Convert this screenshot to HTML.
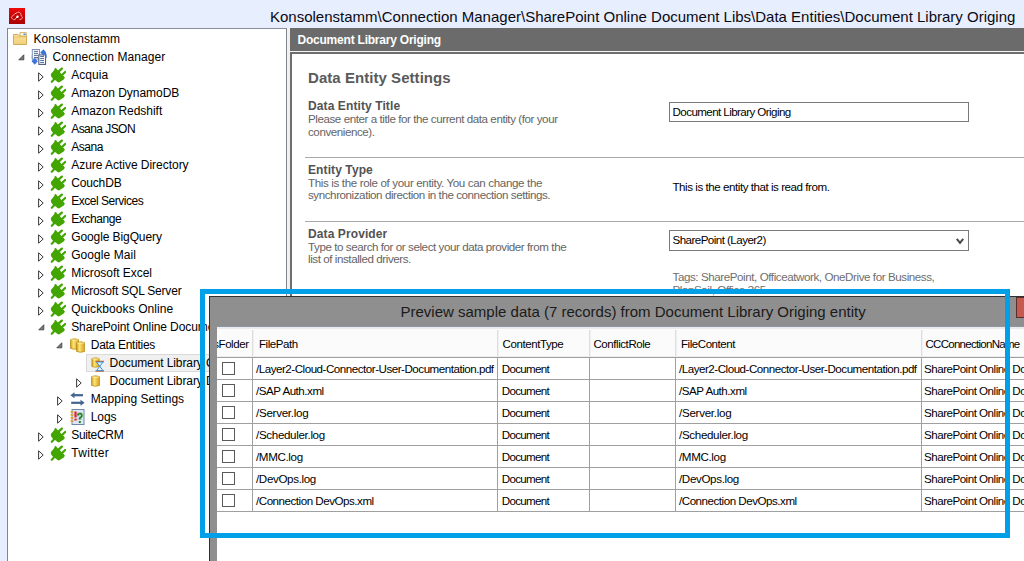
<!DOCTYPE html>
<html><head><meta charset="utf-8"><style>
html,body{margin:0;padding:0;width:1024px;height:561px;overflow:hidden;background:#e7eefd;}
body{position:relative;font-family:"Liberation Sans", sans-serif;}
.t{position:absolute;white-space:nowrap;font-family:"Liberation Sans", sans-serif;}
.r{position:absolute;}
</style></head><body>
<div class="r" style="left:0px;top:0px;width:1024px;height:561px;background:#e7eefd;"></div>
<svg class="r" style="left:9px;top:8px" width="16" height="16" viewBox="0 0 16 16">
<defs><linearGradient id="rg" x1="0" y1="0" x2="0" y2="1"><stop offset="0" stop-color="#f00a0a"/><stop offset="1" stop-color="#a80000"/></linearGradient></defs>
<rect width="16" height="16" fill="url(#rg)"/>
<path d="M10.6 11.6 L12.2 11.2 L13.9 9.5 L12.4 8.2 L11.6 5.4 Q10.5 3.8 8.8 4.3 L7 5.2 L4.8 6.6 L2.2 9.5 L4.4 11.6 L6.6 11.6" fill="none" stroke="#fff" stroke-width="0.9" stroke-dasharray="1.1 0.5"/>
<circle cx="8.5" cy="8.8" r="1.2" fill="#fff"/>
<path d="M8.3 9 L6.4 10.6" stroke="#fff" stroke-width="1"/>
</svg>
<div class="t" style="left:270px;top:8.80px;font-size:15px;line-height:15px;color:#0a0a14;font-weight:400;letter-spacing:0px;">Konsolenstamm\Connection Manager\SharePoint Online Document Libs\Data Entities\Document Library Origing</div>
<div class="r" style="left:7px;top:28px;width:280px;height:533px;background:#fff;border-left:1px solid #80858e;border-top:1px solid #8a8e96;border-right:1px solid #80858e;box-sizing:border-box;"></div>
<div class="r" style="left:287px;top:28px;width:3px;height:533px;background:#f0f0f0;"></div>
<svg width="0" height="0" style="position:absolute">
<defs>
<linearGradient id="gold" x1="0" y1="0" x2="1" y2="0"><stop offset="0" stop-color="#c99a10"/><stop offset="0.35" stop-color="#fde37a"/><stop offset="1" stop-color="#d9a21a"/></linearGradient>
<linearGradient id="fold" x1="0" y1="0" x2="0" y2="1"><stop offset="0" stop-color="#fbe3a0"/><stop offset="1" stop-color="#f0cf78"/></linearGradient>
<symbol id="plug" viewBox="0 0 16 16">
<polygon points="0.8,7.2 2.4,5.2 4.3,2.9 4.7,1.3 5.9,0.9 7.4,2.9 9,4 10.6,6 12.1,7.9 13.7,9.1 14.9,10.7 13.7,12.6 9,15.4 7.4,15 5.9,13.4 3.5,12.6 1.2,9.5" fill="#43a500"/>
<path d="M8.8 4.4 L11.8 1.6 M12 8 L15.2 5" stroke="#43a500" stroke-width="2.3" stroke-linecap="round"/>
<path d="M4.6 11.8 L1.8 14.8" stroke="#43a500" stroke-width="2.1" stroke-linecap="round"/>
</symbol>
<symbol id="cyl" viewBox="0 0 9 12">
<path d="M0.5 1.6 Q4.5 -0.2 8.5 1.6 L8.5 10.4 Q4.5 12.2 0.5 10.4 Z" fill="url(#gold)" stroke="#b88a12" stroke-width="0.7"/>
<path d="M0.8 1.8 Q4.5 3.2 8.2 1.8" fill="none" stroke="#fff1a8" stroke-width="0.8"/>
</symbol>
</defs></svg>
<div class="r" style="left:86px;top:354px;width:200px;height:18px;background:#f0f0f0;border:1px solid #d9d9d9;box-sizing:border-box;"></div>
<svg class="r" style="left:13px;top:32px" width="14" height="13" viewBox="0 0 14 13">
<path d="M0.5 2.5 L5 2.5 L6.5 4 L13.5 4 L13.5 12.5 L0.5 12.5 Z" fill="url(#fold)" stroke="#c8a550" stroke-width="0.9"/>
<path d="M7 0.7 L13.3 0.7 L13.3 4 L7 4 Z" fill="#fff" stroke="#c8a550" stroke-width="0.9"/>
<rect x="10.5" y="1.5" width="2" height="1.5" fill="#4a90e0"/>
<path d="M0.5 5 L13.5 5" stroke="#e8c46a" stroke-width="1"/>
</svg>
<div class="t" style="left:33.5px;top:32.64px;font-size:12px;line-height:12px;color:#000;font-weight:400;letter-spacing:0.042px;white-space:nowrap;">Konsolenstamm</div>
<svg class="r" style="left:17.5px;top:54.3px" width="7" height="7" viewBox="0 0 7 7"><path d="M5.8 0.8 L5.8 5.8 L0.8 5.8 Z" fill="#7a7a7a" stroke="#454545" stroke-width="0.9"/></svg>
<svg class="r" style="left:31px;top:49px" width="17" height="17" viewBox="0 0 17 17">
<rect x="1.3" y="0.5" width="7.2" height="9.6" fill="#f3f6fb" stroke="#8393b3" stroke-width="1"/>
<path d="M3 2.4 H7 M3 4.4 H7 M3 6.4 H7 M3 8.5 H7" stroke="#5b6e99" stroke-width="1"/>
<rect x="7.8" y="5.9" width="6.8" height="9.5" fill="#f3f6fb" stroke="#42536f" stroke-width="1"/>
<path d="M9.2 7.5 H13 M9.2 9.5 H13 M9.2 11.5 H13 M9.2 13.5 H13" stroke="#5b6e99" stroke-width="1"/>
<path d="M12 2 Q15.5 3 15 9" fill="none" stroke="#3f6fd0" stroke-width="1.3"/>
<path d="M9.2 3.5 L12.5 0.2 L15.2 3.5 L12.5 6.8 Z" fill="#3c74dc"/>
<path d="M5 14 Q0.8 13 1.2 6.4" fill="none" stroke="#8aa0c8" stroke-width="1.2"/>
<path d="M0.6 12.3 L3.8 9 L6.8 12.3 L3.8 15.8 Z" fill="#3c74dc"/>
</svg>
<div class="t" style="left:52.5px;top:50.64px;font-size:12px;line-height:12px;color:#000;font-weight:400;letter-spacing:0.082px;white-space:nowrap;">Connection Manager</div>
<svg class="r" style="left:38px;top:72px" width="6" height="10" viewBox="0 0 6 10"><path d="M0.6 0.8 L5.2 5 L0.6 9.2 Z" fill="#fff" stroke="#3a3a3a" stroke-width="1"/></svg>
<svg class="r" style="left:50px;top:67px" width="16" height="16"><use href="#plug"/></svg>
<div class="t" style="left:71.2px;top:68.64px;font-size:12px;line-height:12px;color:#000;font-weight:400;letter-spacing:0.06px;white-space:nowrap;">Acquia</div>
<svg class="r" style="left:38px;top:90px" width="6" height="10" viewBox="0 0 6 10"><path d="M0.6 0.8 L5.2 5 L0.6 9.2 Z" fill="#fff" stroke="#3a3a3a" stroke-width="1"/></svg>
<svg class="r" style="left:50px;top:85px" width="16" height="16"><use href="#plug"/></svg>
<div class="t" style="left:71.2px;top:86.64px;font-size:12px;line-height:12px;color:#000;font-weight:400;letter-spacing:-0.043px;white-space:nowrap;">Amazon DynamoDB</div>
<svg class="r" style="left:38px;top:108px" width="6" height="10" viewBox="0 0 6 10"><path d="M0.6 0.8 L5.2 5 L0.6 9.2 Z" fill="#fff" stroke="#3a3a3a" stroke-width="1"/></svg>
<svg class="r" style="left:50px;top:103px" width="16" height="16"><use href="#plug"/></svg>
<div class="t" style="left:71.2px;top:104.64px;font-size:12px;line-height:12px;color:#000;font-weight:400;letter-spacing:-0.021px;white-space:nowrap;">Amazon Redshift</div>
<svg class="r" style="left:38px;top:126px" width="6" height="10" viewBox="0 0 6 10"><path d="M0.6 0.8 L5.2 5 L0.6 9.2 Z" fill="#fff" stroke="#3a3a3a" stroke-width="1"/></svg>
<svg class="r" style="left:50px;top:121px" width="16" height="16"><use href="#plug"/></svg>
<div class="t" style="left:71.2px;top:122.64px;font-size:12px;line-height:12px;color:#000;font-weight:400;letter-spacing:-0.556px;white-space:nowrap;">Asana JSON</div>
<svg class="r" style="left:38px;top:144px" width="6" height="10" viewBox="0 0 6 10"><path d="M0.6 0.8 L5.2 5 L0.6 9.2 Z" fill="#fff" stroke="#3a3a3a" stroke-width="1"/></svg>
<svg class="r" style="left:50px;top:139px" width="16" height="16"><use href="#plug"/></svg>
<div class="t" style="left:71.2px;top:140.64px;font-size:12px;line-height:12px;color:#000;font-weight:400;letter-spacing:-0.475px;white-space:nowrap;">Asana</div>
<svg class="r" style="left:38px;top:162px" width="6" height="10" viewBox="0 0 6 10"><path d="M0.6 0.8 L5.2 5 L0.6 9.2 Z" fill="#fff" stroke="#3a3a3a" stroke-width="1"/></svg>
<svg class="r" style="left:50px;top:157px" width="16" height="16"><use href="#plug"/></svg>
<div class="t" style="left:71.2px;top:158.64px;font-size:12px;line-height:12px;color:#000;font-weight:400;letter-spacing:-0.029px;white-space:nowrap;">Azure Active Directory</div>
<svg class="r" style="left:38px;top:180px" width="6" height="10" viewBox="0 0 6 10"><path d="M0.6 0.8 L5.2 5 L0.6 9.2 Z" fill="#fff" stroke="#3a3a3a" stroke-width="1"/></svg>
<svg class="r" style="left:50px;top:175px" width="16" height="16"><use href="#plug"/></svg>
<div class="t" style="left:71.2px;top:176.64px;font-size:12px;line-height:12px;color:#000;font-weight:400;letter-spacing:-0.15px;white-space:nowrap;">CouchDB</div>
<svg class="r" style="left:38px;top:198px" width="6" height="10" viewBox="0 0 6 10"><path d="M0.6 0.8 L5.2 5 L0.6 9.2 Z" fill="#fff" stroke="#3a3a3a" stroke-width="1"/></svg>
<svg class="r" style="left:50px;top:193px" width="16" height="16"><use href="#plug"/></svg>
<div class="t" style="left:71.2px;top:194.64px;font-size:12px;line-height:12px;color:#000;font-weight:400;letter-spacing:-0.477px;white-space:nowrap;">Excel Services</div>
<svg class="r" style="left:38px;top:216px" width="6" height="10" viewBox="0 0 6 10"><path d="M0.6 0.8 L5.2 5 L0.6 9.2 Z" fill="#fff" stroke="#3a3a3a" stroke-width="1"/></svg>
<svg class="r" style="left:50px;top:211px" width="16" height="16"><use href="#plug"/></svg>
<div class="t" style="left:71.2px;top:212.64px;font-size:12px;line-height:12px;color:#000;font-weight:400;letter-spacing:-0.429px;white-space:nowrap;">Exchange</div>
<svg class="r" style="left:38px;top:234px" width="6" height="10" viewBox="0 0 6 10"><path d="M0.6 0.8 L5.2 5 L0.6 9.2 Z" fill="#fff" stroke="#3a3a3a" stroke-width="1"/></svg>
<svg class="r" style="left:50px;top:229px" width="16" height="16"><use href="#plug"/></svg>
<div class="t" style="left:71.2px;top:230.64px;font-size:12px;line-height:12px;color:#000;font-weight:400;letter-spacing:-0.093px;white-space:nowrap;">Google BigQuery</div>
<svg class="r" style="left:38px;top:252px" width="6" height="10" viewBox="0 0 6 10"><path d="M0.6 0.8 L5.2 5 L0.6 9.2 Z" fill="#fff" stroke="#3a3a3a" stroke-width="1"/></svg>
<svg class="r" style="left:50px;top:247px" width="16" height="16"><use href="#plug"/></svg>
<div class="t" style="left:71.2px;top:248.64px;font-size:12px;line-height:12px;color:#000;font-weight:400;letter-spacing:0.08px;white-space:nowrap;">Google Mail</div>
<svg class="r" style="left:38px;top:270px" width="6" height="10" viewBox="0 0 6 10"><path d="M0.6 0.8 L5.2 5 L0.6 9.2 Z" fill="#fff" stroke="#3a3a3a" stroke-width="1"/></svg>
<svg class="r" style="left:50px;top:265px" width="16" height="16"><use href="#plug"/></svg>
<div class="t" style="left:71.2px;top:266.64px;font-size:12px;line-height:12px;color:#000;font-weight:400;letter-spacing:-0.036px;white-space:nowrap;">Microsoft Excel</div>
<svg class="r" style="left:38px;top:288px" width="6" height="10" viewBox="0 0 6 10"><path d="M0.6 0.8 L5.2 5 L0.6 9.2 Z" fill="#fff" stroke="#3a3a3a" stroke-width="1"/></svg>
<svg class="r" style="left:50px;top:283px" width="16" height="16"><use href="#plug"/></svg>
<div class="t" style="left:71.2px;top:284.64px;font-size:12px;line-height:12px;color:#000;font-weight:400;letter-spacing:-0.2px;white-space:nowrap;">Microsoft SQL Server</div>
<svg class="r" style="left:38px;top:306px" width="6" height="10" viewBox="0 0 6 10"><path d="M0.6 0.8 L5.2 5 L0.6 9.2 Z" fill="#fff" stroke="#3a3a3a" stroke-width="1"/></svg>
<svg class="r" style="left:50px;top:301px" width="16" height="16"><use href="#plug"/></svg>
<div class="t" style="left:71.2px;top:302.64px;font-size:12px;line-height:12px;color:#000;font-weight:400;letter-spacing:0.087px;white-space:nowrap;">Quickbooks Online</div>
<svg class="r" style="left:38px;top:324.3px" width="7" height="7" viewBox="0 0 7 7"><path d="M5.8 0.8 L5.8 5.8 L0.8 5.8 Z" fill="#7a7a7a" stroke="#454545" stroke-width="0.9"/></svg>
<svg class="r" style="left:50px;top:319px" width="16" height="16"><use href="#plug"/></svg>
<div class="t" style="left:71.2px;top:320.64px;font-size:12px;line-height:12px;color:#000;font-weight:400;letter-spacing:-0.1px;white-space:nowrap;">SharePoint Online Document Libs</div>
<svg class="r" style="left:55.8px;top:342.3px" width="7" height="7" viewBox="0 0 7 7"><path d="M5.8 0.8 L5.8 5.8 L0.8 5.8 Z" fill="#7a7a7a" stroke="#454545" stroke-width="0.9"/></svg>
<svg class="r" style="left:70px;top:344px" width="0" height="0"></svg><svg class="r" style="left:70px;top:338px" width="9" height="12"><use href="#cyl"/></svg>
<svg class="r" style="left:76px;top:341px" width="9" height="12"><use href="#cyl"/></svg>
<div class="t" style="left:90.8px;top:338.64px;font-size:12px;line-height:12px;color:#000;font-weight:400;letter-spacing:-0.292px;white-space:nowrap;">Data Entities</div>
<svg class="r" style="left:91px;top:357px" width="14" height="15" viewBox="0 0 14 15">
<use href="#cyl" x="0" y="0" width="9" height="11"/>
<path d="M4.5 4.5 H13 M4.5 14 H13" stroke="#d06a1a" stroke-width="1.3"/>
<path d="M5.5 5 L12 5 L8.8 9.3 L12 13.6 L5.5 13.6 L8.8 9.3 Z" fill="#e6f2ff" stroke="#3f8fd8" stroke-width="1"/>
</svg>
<div class="t" style="left:109.6px;top:356.64px;font-size:12px;line-height:12px;color:#000;font-weight:400;letter-spacing:-0.1px;white-space:nowrap;">Document Library Origing</div>
<svg class="r" style="left:76px;top:378px" width="6" height="10" viewBox="0 0 6 10"><path d="M0.6 0.8 L5.2 5 L0.6 9.2 Z" fill="#fff" stroke="#3a3a3a" stroke-width="1"/></svg>
<svg class="r" style="left:91px;top:375px" width="9" height="12"><use href="#cyl"/></svg>
<div class="t" style="left:109.6px;top:374.64px;font-size:12px;line-height:12px;color:#000;font-weight:400;letter-spacing:-0.1px;white-space:nowrap;">Document Library Destination</div>
<svg class="r" style="left:56.599999999999994px;top:396px" width="6" height="10" viewBox="0 0 6 10"><path d="M0.6 0.8 L5.2 5 L0.6 9.2 Z" fill="#fff" stroke="#3a3a3a" stroke-width="1"/></svg>
<svg class="r" style="left:70px;top:392px" width="15" height="15" viewBox="0 0 15 15">
<path d="M3 3.2 H13" stroke="#44638f" stroke-width="2.2"/>
<path d="M0.3 3.2 L4.5 0.2 L4.5 6.2 Z" fill="#44638f"/>
<path d="M1.2 10.8 H11.5" stroke="#44638f" stroke-width="2.2"/>
<path d="M14.7 10.8 L10.5 7.8 L10.5 13.8 Z" fill="#44638f"/>
</svg>
<div class="t" style="left:90.8px;top:392.64px;font-size:12px;line-height:12px;color:#000;font-weight:400;letter-spacing:0.04px;white-space:nowrap;">Mapping Settings</div>
<svg class="r" style="left:56.599999999999994px;top:414px" width="6" height="10" viewBox="0 0 6 10"><path d="M0.6 0.8 L5.2 5 L0.6 9.2 Z" fill="#fff" stroke="#3a3a3a" stroke-width="1"/></svg>
<svg class="r" style="left:70px;top:409px" width="15" height="16" viewBox="0 0 15 16">
<rect x="2" y="0.5" width="12" height="15" fill="#dde6f4" stroke="#6f86a8" stroke-width="1"/>
<path d="M6 4 H12 M6 7 H12 M6 10 H12" stroke="#9fb2cf" stroke-width="0.8"/>
<path d="M0.5 3 H3.5 M0.5 6 H3.5 M0.5 9 H3.5 M0.5 12 H3.5" stroke="#e0a820" stroke-width="1.4"/>
<path d="M5.5 2.5 V8.5" stroke="#ee2020" stroke-width="2.2"/>
<rect x="4.4" y="9.6" width="2.2" height="2" fill="#ee2020"/>
<path d="M7.6 6.5 Q8 4.5 10 4.6 Q12.2 4.8 11.8 7 Q11.5 8.2 9.8 9 V10.5" fill="none" stroke="#1e8a1e" stroke-width="1.8"/>
<rect x="8.8" y="12" width="2" height="2" fill="#1e8a1e"/>
</svg>
<div class="t" style="left:90.8px;top:410.64px;font-size:12px;line-height:12px;color:#000;font-weight:400;letter-spacing:-0.133px;white-space:nowrap;">Logs</div>
<svg class="r" style="left:38px;top:432px" width="6" height="10" viewBox="0 0 6 10"><path d="M0.6 0.8 L5.2 5 L0.6 9.2 Z" fill="#fff" stroke="#3a3a3a" stroke-width="1"/></svg>
<svg class="r" style="left:50px;top:427px" width="16" height="16"><use href="#plug"/></svg>
<div class="t" style="left:71.2px;top:428.64px;font-size:12px;line-height:12px;color:#000;font-weight:400;letter-spacing:-0.314px;white-space:nowrap;">SuiteCRM</div>
<svg class="r" style="left:38px;top:450px" width="6" height="10" viewBox="0 0 6 10"><path d="M0.6 0.8 L5.2 5 L0.6 9.2 Z" fill="#fff" stroke="#3a3a3a" stroke-width="1"/></svg>
<svg class="r" style="left:50px;top:445px" width="16" height="16"><use href="#plug"/></svg>
<div class="t" style="left:71.2px;top:446.64px;font-size:12px;line-height:12px;color:#000;font-weight:400;letter-spacing:0.367px;white-space:nowrap;">Twitter</div>
<div class="r" style="left:290px;top:28px;width:734px;height:23px;background:#6b6b6b;"></div>
<div class="t" style="left:297.5px;top:33.59px;font-size:12px;line-height:12px;color:#fff;font-weight:700;letter-spacing:-0.22px;white-space:nowrap;">Document Library Origing</div>
<div class="r" style="left:290px;top:51px;width:734px;height:1px;background:#f4f4f4;"></div>
<div class="r" style="left:290px;top:52px;width:734px;height:509px;background:#fff;border-left:2px solid #6e6e6e;border-top:2px solid #6e6e6e;box-sizing:border-box;"></div>
<div class="t" style="left:308px;top:69.90px;font-size:15px;line-height:15px;color:#5a5a5a;font-weight:700;letter-spacing:0.05px;white-space:nowrap;">Data Entity Settings</div>
<div class="t" style="left:308px;top:100.24px;font-size:12px;line-height:12px;color:#525252;font-weight:700;letter-spacing:0.1px;white-space:nowrap;">Data Entity Title</div>
<div class="t" style="left:308px;top:113.08px;font-size:11.6px;line-height:11.6px;color:#646464;font-weight:400;letter-spacing:-0.43px;white-space:nowrap;">Please enter a title for the current data entity (for your</div>
<div class="t" style="left:308px;top:125.78px;font-size:11.6px;line-height:11.6px;color:#646464;font-weight:400;letter-spacing:-0.43px;white-space:nowrap;">convenience).</div>
<div class="r" style="left:305px;top:157px;width:719px;height:1px;background:#a9a9a9;"></div>
<div class="t" style="left:308px;top:163.84px;font-size:12px;line-height:12px;color:#525252;font-weight:700;letter-spacing:0.1px;white-space:nowrap;">Entity Type</div>
<div class="t" style="left:308px;top:176.68px;font-size:11.6px;line-height:11.6px;color:#646464;font-weight:400;letter-spacing:-0.36px;white-space:nowrap;">This is the role of your entity. You can change the</div>
<div class="t" style="left:308px;top:189.38px;font-size:11.6px;line-height:11.6px;color:#646464;font-weight:400;letter-spacing:-0.43px;white-space:nowrap;">synchronization direction in the connection settings.</div>
<div class="r" style="left:305px;top:221px;width:719px;height:1px;background:#a9a9a9;"></div>
<div class="t" style="left:308px;top:227.74px;font-size:12px;line-height:12px;color:#525252;font-weight:700;letter-spacing:0.1px;white-space:nowrap;">Data Provider</div>
<div class="t" style="left:308px;top:240.58px;font-size:11.6px;line-height:11.6px;color:#646464;font-weight:400;letter-spacing:-0.43px;white-space:nowrap;">Type to search for or select your data provider from the</div>
<div class="t" style="left:308px;top:253.28px;font-size:11.6px;line-height:11.6px;color:#646464;font-weight:400;letter-spacing:-0.43px;white-space:nowrap;">list of installed drivers.</div>
<div class="r" style="left:669px;top:102px;width:300px;height:20px;background:#fff;border:1px solid #7a7a7a;box-sizing:border-box;"></div>
<div class="t" style="left:672.5px;top:106.18px;font-size:11.6px;line-height:11.6px;color:#000;font-weight:400;letter-spacing:-0.58px;white-space:nowrap;">Document Library Origing</div>
<div class="t" style="left:672.5px;top:180.78px;font-size:11.6px;line-height:11.6px;color:#000;font-weight:400;letter-spacing:-0.46px;white-space:nowrap;">This is the entity that is read from.</div>
<div class="r" style="left:669px;top:230px;width:300px;height:21px;background:#fff;border:1px solid #7a7a7a;box-sizing:border-box;"></div>
<div class="t" style="left:672.5px;top:233.78px;font-size:11.6px;line-height:11.6px;color:#000;font-weight:400;letter-spacing:-0.55px;white-space:nowrap;">SharePoint (Layer2)</div>
<svg class="r" style="left:956px;top:237.5px" width="8" height="7" viewBox="0 0 8 7"><path d="M0.8 0.8 L4 4.8 L7.2 0.8" fill="none" stroke="#4a4a4a" stroke-width="2"/></svg>
<div class="t" style="left:672.5px;top:271.18px;font-size:11.6px;line-height:11.6px;color:#6e6e6e;font-weight:400;letter-spacing:-0.42px;white-space:nowrap;">Tags: SharePoint, Officeatwork, OneDrive for Business,</div>
<div class="t" style="left:672.5px;top:284.18px;font-size:11.6px;line-height:11.6px;color:#6e6e6e;font-weight:400;letter-spacing:-0.42px;white-space:nowrap;">PlanSail, Office 365</div>
<div class="r" style="left:209px;top:296px;width:815px;height:265px;background:#8f8f8f;border-left:1px solid #2f3034;border-top:1px solid #2f3034;box-sizing:border-box;"></div>
<div class="t" style="left:400.5px;top:303.90px;font-size:15px;line-height:15px;color:#1a1a1a;font-weight:400;letter-spacing:0px;white-space:nowrap;">Preview sample data (7 records) from Document Library Origing entity</div>
<div class="r" style="left:1016px;top:297px;width:8px;height:21px;background:#c65a50;border-left:1px solid #5a2e2a;border-bottom:1px solid #5a2e2a;border-top:1px solid #5a2e2a;box-sizing:border-box;"></div>
<div class="r" style="left:217px;top:326px;width:807px;height:235px;background:#fff;"></div>
<div class="r" style="left:217px;top:326px;width:807px;height:1px;background:#8c97a5;"></div>
<div class="r" style="left:217px;top:327px;width:807px;height:2px;background:#ebebeb;"></div>
<div class="r" style="left:217px;top:329px;width:807px;height:27px;background:#fbfbfb;"></div>
<div class="r" style="left:217px;top:356px;width:807px;height:1px;background:#ececec;"></div>
<div class="r" style="left:217px;top:357px;width:807px;height:1px;background:#a0a0a0;"></div>
<div class="r" style="left:252px;top:330px;width:1px;height:26px;background:#dedede;"></div>
<div class="r" style="left:253px;top:330px;width:1px;height:26px;background:#f0f0f0;"></div>
<div class="r" style="left:252px;top:358px;width:1px;height:153px;background:#a0a0a0;"></div>
<div class="r" style="left:497px;top:330px;width:1px;height:26px;background:#dedede;"></div>
<div class="r" style="left:498px;top:330px;width:1px;height:26px;background:#f0f0f0;"></div>
<div class="r" style="left:497px;top:358px;width:1px;height:153px;background:#a0a0a0;"></div>
<div class="r" style="left:589px;top:330px;width:1px;height:26px;background:#dedede;"></div>
<div class="r" style="left:590px;top:330px;width:1px;height:26px;background:#f0f0f0;"></div>
<div class="r" style="left:589px;top:358px;width:1px;height:153px;background:#a0a0a0;"></div>
<div class="r" style="left:675px;top:330px;width:1px;height:26px;background:#dedede;"></div>
<div class="r" style="left:676px;top:330px;width:1px;height:26px;background:#f0f0f0;"></div>
<div class="r" style="left:675px;top:358px;width:1px;height:153px;background:#a0a0a0;"></div>
<div class="r" style="left:921px;top:330px;width:1px;height:26px;background:#dedede;"></div>
<div class="r" style="left:922px;top:330px;width:1px;height:26px;background:#f0f0f0;"></div>
<div class="r" style="left:921px;top:358px;width:1px;height:153px;background:#a0a0a0;"></div>
<div class="r" style="left:217px;top:379px;width:807px;height:1px;background:#a0a0a0;"></div>
<div class="r" style="left:217px;top:401px;width:807px;height:1px;background:#a0a0a0;"></div>
<div class="r" style="left:217px;top:423px;width:807px;height:1px;background:#a0a0a0;"></div>
<div class="r" style="left:217px;top:445px;width:807px;height:1px;background:#a0a0a0;"></div>
<div class="r" style="left:217px;top:467px;width:807px;height:1px;background:#a0a0a0;"></div>
<div class="r" style="left:217px;top:489px;width:807px;height:1px;background:#a0a0a0;"></div>
<div class="r" style="left:217px;top:511px;width:807px;height:1px;background:#a0a0a0;"></div>
<div class="r" style="left:217px;top:330px;width:34px;height:26px;overflow:hidden"><div class="t" style="right:2.3px;top:8.56px;font-size:11.5px;line-height:11.5px;letter-spacing:-0.4px;color:#000">IsFolder</div></div><div class="t" style="left:259px;top:338.56px;font-size:11.5px;line-height:11.5px;color:#000;font-weight:400;letter-spacing:-0.42px;white-space:nowrap;">FilePath</div>
<div class="t" style="left:502.6px;top:338.56px;font-size:11.5px;line-height:11.5px;color:#000;font-weight:400;letter-spacing:-0.42px;white-space:nowrap;">ContentType</div>
<div class="t" style="left:593.4px;top:338.56px;font-size:11.5px;line-height:11.5px;color:#000;font-weight:400;letter-spacing:-0.42px;white-space:nowrap;">ConflictRole</div>
<div class="t" style="left:680.9px;top:338.56px;font-size:11.5px;line-height:11.5px;color:#000;font-weight:400;letter-spacing:-0.42px;white-space:nowrap;">FileContent</div>
<div class="t" style="left:925.5px;top:338.56px;font-size:11.5px;line-height:11.5px;color:#000;font-weight:400;letter-spacing:-0.72px;white-space:nowrap;">CCConnectionName</div>
<div class="r" style="left:222px;top:362px;width:13px;height:13px;background:#fff;border:1px solid #5a5a5a;box-sizing:border-box;"></div>
<div class="r" style="left:253px;top:358px;width:244px;height:21px;overflow:hidden"><div class="t" style="left:3px;top:5.48px;font-size:11.6px;line-height:11.6px;color:#000;font-weight:400;letter-spacing:-0.48px;white-space:nowrap;">/Layer2-Cloud-Connector-User-Documentation.pdf</div>
</div><div class="t" style="left:501.8px;top:363.48px;font-size:11.6px;line-height:11.6px;color:#000;font-weight:400;letter-spacing:-0.7px;white-space:nowrap;">Document</div>
<div class="r" style="left:676px;top:358px;width:245px;height:21px;overflow:hidden"><div class="t" style="left:3px;top:5.48px;font-size:11.6px;line-height:11.6px;color:#000;font-weight:400;letter-spacing:-0.48px;white-space:nowrap;">/Layer2-Cloud-Connector-User-Documentation.pdf</div>
</div><div class="t" style="left:924px;top:363.48px;font-size:11.6px;line-height:11.6px;color:#000;font-weight:400;letter-spacing:-0.5px;white-space:nowrap;">SharePoint Online Document Libs</div>
<div class="r" style="left:222px;top:384px;width:13px;height:13px;background:#fff;border:1px solid #5a5a5a;box-sizing:border-box;"></div>
<div class="r" style="left:253px;top:380px;width:244px;height:21px;overflow:hidden"><div class="t" style="left:3px;top:5.48px;font-size:11.6px;line-height:11.6px;color:#000;font-weight:400;letter-spacing:-0.48px;white-space:nowrap;">/SAP Auth.xml</div>
</div><div class="t" style="left:501.8px;top:385.48px;font-size:11.6px;line-height:11.6px;color:#000;font-weight:400;letter-spacing:-0.7px;white-space:nowrap;">Document</div>
<div class="r" style="left:676px;top:380px;width:245px;height:21px;overflow:hidden"><div class="t" style="left:3px;top:5.48px;font-size:11.6px;line-height:11.6px;color:#000;font-weight:400;letter-spacing:-0.48px;white-space:nowrap;">/SAP Auth.xml</div>
</div><div class="t" style="left:924px;top:385.48px;font-size:11.6px;line-height:11.6px;color:#000;font-weight:400;letter-spacing:-0.5px;white-space:nowrap;">SharePoint Online Document Libs</div>
<div class="r" style="left:222px;top:406px;width:13px;height:13px;background:#fff;border:1px solid #5a5a5a;box-sizing:border-box;"></div>
<div class="r" style="left:253px;top:402px;width:244px;height:21px;overflow:hidden"><div class="t" style="left:3px;top:5.48px;font-size:11.6px;line-height:11.6px;color:#000;font-weight:400;letter-spacing:-0.28px;white-space:nowrap;">/Server.log</div>
</div><div class="t" style="left:501.8px;top:407.48px;font-size:11.6px;line-height:11.6px;color:#000;font-weight:400;letter-spacing:-0.7px;white-space:nowrap;">Document</div>
<div class="r" style="left:676px;top:402px;width:245px;height:21px;overflow:hidden"><div class="t" style="left:3px;top:5.48px;font-size:11.6px;line-height:11.6px;color:#000;font-weight:400;letter-spacing:-0.28px;white-space:nowrap;">/Server.log</div>
</div><div class="t" style="left:924px;top:407.48px;font-size:11.6px;line-height:11.6px;color:#000;font-weight:400;letter-spacing:-0.5px;white-space:nowrap;">SharePoint Online Document Libs</div>
<div class="r" style="left:222px;top:428px;width:13px;height:13px;background:#fff;border:1px solid #5a5a5a;box-sizing:border-box;"></div>
<div class="r" style="left:253px;top:424px;width:244px;height:21px;overflow:hidden"><div class="t" style="left:3px;top:5.48px;font-size:11.6px;line-height:11.6px;color:#000;font-weight:400;letter-spacing:-0.33px;white-space:nowrap;">/Scheduler.log</div>
</div><div class="t" style="left:501.8px;top:429.48px;font-size:11.6px;line-height:11.6px;color:#000;font-weight:400;letter-spacing:-0.7px;white-space:nowrap;">Document</div>
<div class="r" style="left:676px;top:424px;width:245px;height:21px;overflow:hidden"><div class="t" style="left:3px;top:5.48px;font-size:11.6px;line-height:11.6px;color:#000;font-weight:400;letter-spacing:-0.33px;white-space:nowrap;">/Scheduler.log</div>
</div><div class="t" style="left:924px;top:429.48px;font-size:11.6px;line-height:11.6px;color:#000;font-weight:400;letter-spacing:-0.5px;white-space:nowrap;">SharePoint Online Document Libs</div>
<div class="r" style="left:222px;top:450px;width:13px;height:13px;background:#fff;border:1px solid #5a5a5a;box-sizing:border-box;"></div>
<div class="r" style="left:253px;top:446px;width:244px;height:21px;overflow:hidden"><div class="t" style="left:3px;top:5.48px;font-size:11.6px;line-height:11.6px;color:#000;font-weight:400;letter-spacing:-0.36px;white-space:nowrap;">/MMC.log</div>
</div><div class="t" style="left:501.8px;top:451.48px;font-size:11.6px;line-height:11.6px;color:#000;font-weight:400;letter-spacing:-0.7px;white-space:nowrap;">Document</div>
<div class="r" style="left:676px;top:446px;width:245px;height:21px;overflow:hidden"><div class="t" style="left:3px;top:5.48px;font-size:11.6px;line-height:11.6px;color:#000;font-weight:400;letter-spacing:-0.36px;white-space:nowrap;">/MMC.log</div>
</div><div class="t" style="left:924px;top:451.48px;font-size:11.6px;line-height:11.6px;color:#000;font-weight:400;letter-spacing:-0.5px;white-space:nowrap;">SharePoint Online Document Libs</div>
<div class="r" style="left:222px;top:472px;width:13px;height:13px;background:#fff;border:1px solid #5a5a5a;box-sizing:border-box;"></div>
<div class="r" style="left:253px;top:468px;width:244px;height:21px;overflow:hidden"><div class="t" style="left:3px;top:5.48px;font-size:11.6px;line-height:11.6px;color:#000;font-weight:400;letter-spacing:-0.35px;white-space:nowrap;">/DevOps.log</div>
</div><div class="t" style="left:501.8px;top:473.48px;font-size:11.6px;line-height:11.6px;color:#000;font-weight:400;letter-spacing:-0.7px;white-space:nowrap;">Document</div>
<div class="r" style="left:676px;top:468px;width:245px;height:21px;overflow:hidden"><div class="t" style="left:3px;top:5.48px;font-size:11.6px;line-height:11.6px;color:#000;font-weight:400;letter-spacing:-0.35px;white-space:nowrap;">/DevOps.log</div>
</div><div class="t" style="left:924px;top:473.48px;font-size:11.6px;line-height:11.6px;color:#000;font-weight:400;letter-spacing:-0.5px;white-space:nowrap;">SharePoint Online Document Libs</div>
<div class="r" style="left:222px;top:494px;width:13px;height:13px;background:#fff;border:1px solid #5a5a5a;box-sizing:border-box;"></div>
<div class="r" style="left:253px;top:490px;width:244px;height:21px;overflow:hidden"><div class="t" style="left:3px;top:5.48px;font-size:11.6px;line-height:11.6px;color:#000;font-weight:400;letter-spacing:-0.48px;white-space:nowrap;">/Connection DevOps.xml</div>
</div><div class="t" style="left:501.8px;top:495.48px;font-size:11.6px;line-height:11.6px;color:#000;font-weight:400;letter-spacing:-0.7px;white-space:nowrap;">Document</div>
<div class="r" style="left:676px;top:490px;width:245px;height:21px;overflow:hidden"><div class="t" style="left:3px;top:5.48px;font-size:11.6px;line-height:11.6px;color:#000;font-weight:400;letter-spacing:-0.48px;white-space:nowrap;">/Connection DevOps.xml</div>
</div><div class="t" style="left:924px;top:495.48px;font-size:11.6px;line-height:11.6px;color:#000;font-weight:400;letter-spacing:-0.5px;white-space:nowrap;">SharePoint Online Document Libs</div>
<div class="r" style="left:200px;top:289px;width:810px;height:249px;background:transparent;border:5px solid #00a0e9;box-sizing:border-box;"></div>

</body></html>
